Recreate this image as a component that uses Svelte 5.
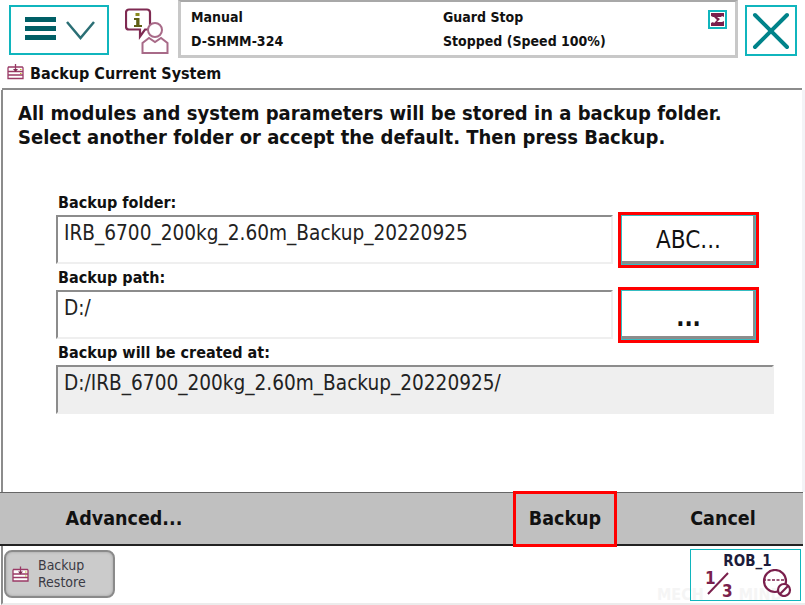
<script>
  const footerLeft = 'Advanced...'
  const fields = [
    { label: 'Backup folder:', value: 'IRB_6700_200kg_2.60m_Backup_20220925', action: 'ABC...' },
    { label: 'Backup path:', value: 'D:/', action: '...' }
  ]
</script>

<div class="screen">
  <header class="topbar">
    <button class="menu-btn" aria-label="Menu">
      <svg width="96" height="46" viewBox="0 0 96 46">
        <path d="M14 12.500h31M14 21.500h31M14 30.500h31" stroke="#005f66" stroke-width="5" fill="none" />
        <path d="M56 15l13.500 16L83 15" stroke="#2b6f75" stroke-width="2.500" fill="none" />
      </svg>
    </button>
    <div class="info-icon">
      <svg width="46" height="46" viewBox="0 0 46 46">
        <path d="M4 1.500h18a3 3 0 0 1 3 3v14a3 3 0 0 1-3 3h-2l-5 7v-7H4a3 3 0 0 1-3-3V4.500a3 3 0 0 1 3-3z" fill="#fff" stroke="#7f2a52" stroke-width="2.200" />
        <rect x="10.500" y="5" width="4" height="3" fill="#8a8a1e" />
        <path d="M9 10h5.500v7H17v2H9v-2h2.200v-5H9z" fill="#5e5e14" />
        <circle cx="30" cy="22" r="7" fill="#fff" stroke="#a86a88" stroke-width="2" />
        <path d="M17.500 45v-10l6.500-5 6 4 6-4 6.500 5v10z" fill="#fff" stroke="#a86a88" stroke-width="2" />
      </svg>
    </div>
    <div class="status">
      <div class="status-col col-a">
        <span>Manual</span>
        <span>D-SHMM-324</span>
      </div>
      <div class="status-col col-b">
        <span>Guard Stop</span>
        <span>Stopped (Speed 100%)</span>
      </div>
      <div class="speed-badge">
        <svg width="15" height="15" viewBox="0 0 15 15">
          <path d="M1 1h13v4l-2-1-1 1H7l3 2-3 3h5l2-1v5H1v-3l2-1 1 1 3-3-3-3H3L1 4z" fill="#7a1f4c" />
        </svg>
      </div>
    </div>
    <button class="close-btn" aria-label="Close">
      <svg width="38" height="38" viewBox="0 0 38 38">
        <path d="M3 3l32 32M35 3L3 35" stroke="#00838a" stroke-width="4" stroke-linecap="round" fill="none" />
      </svg>
    </button>
  </header>

  <div class="title-row">
    <svg class="backup-icon" width="17" height="17" viewBox="0 0 17 17">
      <path d="M1.500 4h14a1 1 0 0 1 .5 1v10.500H1V5zM1 8.500h15M1 12h15M8.500 1v7" fill="#fff" stroke="#9a3a66" stroke-width="1.300" />
      <path d="M6 6h5l-2.500 3z" fill="#7f2a52" />
      <path d="M13 6h1.500v1H13zM13 10h1.500v1H13z" fill="#b8b820" />
    </svg>
    <span>Backup Current System</span>
  </div>

  <main class="content">
    <p class="intro">All modules and system parameters will be stored in a backup folder.<br />Select another folder or accept the default. Then press Backup.</p>

    <div class="form">
      {#each fields as f}
        <div class="field-label">{f.label}</div>
        <div class="field-row">
          <div class="input">{f.value}</div>
          <div class="highlight">
            <button class="action" class:dots={f.action === '...'}>{f.action}</button>
          </div>
        </div>
      {/each}
      <div class="field-label result-label">Backup will be created at:</div>
      <div class="input result">D:/IRB_6700_200kg_2.60m_Backup_20220925/</div>
    </div>
  </main>

  <footer class="cmdbar">
    <div class="cmd advanced">{footerLeft}</div>
    <div class="cmd backup">Backup</div>
    <div class="cmd cancel">Cancel</div>
  </footer>

  <div class="taskbar">
    <button class="task-btn">
      <svg width="17" height="18" viewBox="0 0 17 17">
        <path d="M1.500 4h14a1 1 0 0 1 .5 1v10.500H1V5zM1 8.500h15M1 12h15M8.500 1v7" fill="#fff" stroke="#9a3a66" stroke-width="1.300" />
        <path d="M6 6h5l-2.500 3z" fill="#7f2a52" />
        <path d="M13 6h1.500v1H13zM13 10h1.500v1H13z" fill="#b8b820" />
      </svg>
      <span>Backup<br />Restore</span>
    </button>
    <div class="watermark">MECH MIND</div>
    <div class="rob">
      <div class="rob-name">ROB_1</div>
      <div class="rob-icons">
        <div class="fraction">
          <svg width="32" height="28" viewBox="0 0 32 28">
            <path d="M25 4L5 25" stroke="#7a1f4c" stroke-width="2" fill="none" />
          </svg>
          <span class="num">1</span>
          <span class="den">3</span>
        </div>
        <svg width="34" height="28" viewBox="0 0 34 28">
          <circle cx="13" cy="12" r="11" fill="none" stroke="#7a1f4c" stroke-width="2.200" />
          <path d="M1 11h24" stroke="#7a1f4c" stroke-width="1.600" stroke-dasharray="3 1.500" />
          <circle cx="22" cy="21" r="6" fill="#fff" stroke="#7a1f4c" stroke-width="2.200" />
          <path d="M18 25l8-8" stroke="#7a1f4c" stroke-width="2.200" />
        </svg>
      </div>
    </div>
  </div>
</div>

<style>
  :global(body) {
    margin: 0;
    background: #fff;
  }
  .screen {
    width: 805px;
    height: 605px;
    box-sizing: border-box;
    display: flex;
    flex-direction: column;
    background: #fff;
    font-family: "DejaVu Sans", sans-serif;
    font-stretch: condensed;
    color: #111;
    overflow: hidden;
  }
  button {
    font: inherit;
    color: inherit;
    padding: 0;
    cursor: pointer;
  }
  .topbar {
    height: 58px;
    flex: none;
    display: flex;
    align-items: flex-start;
  }
  .menu-btn {
    width: 100px;
    height: 50px;
    margin: 5px 0 0 9px;
    flex: none;
    background: #fff;
    border: 2px solid #10b5bd;
    display: flex;
    align-items: center;
    justify-content: center;
  }
  .info-icon {
    width: 46px;
    height: 46px;
    margin: 8px 0 0 16px;
    flex: none;
  }
  .status {
    width: 560px;
    height: 58px;
    margin-left: 7px;
    flex: none;
    box-sizing: border-box;
    border: solid #c8c8c8;
    border-width: 2px 3px 3px 3px;
    border-top-color: #a8a8a8;
    display: flex;
    padding: 0 0 0 10px;
    font-size: 14px;
    font-weight: 700;
    position: relative;
  }
  .status-col {
    display: flex;
    flex-direction: column;
    gap: 7px;
    padding-top: 7px;
    line-height: 17px;
    white-space: nowrap;
  }
  .col-a {
    width: 252px;
  }
  .speed-badge {
    position: absolute;
    top: 8px;
    right: 8px;
    width: 15px;
    height: 15px;
    border: 2px solid #10b5bd;
    display: flex;
    align-items: center;
    justify-content: center;
  }
  .close-btn {
    width: 52px;
    height: 51px;
    margin: 5px 0 0 7px;
    flex: none;
    background: #fff;
    border: 2px solid #10b5bd;
    display: flex;
    align-items: center;
    justify-content: center;
  }
  .title-row {
    height: 32px;
    flex: none;
    box-sizing: border-box;
    margin: 0 3px 0 2px;
    padding-left: 5px;
    border-bottom: 2px solid #8c8c8c;
    display: flex;
    align-items: center;
    gap: 6px;
    font-size: 16px;
    font-weight: 700;
  }
  .backup-icon {
    margin-top: -3px;
  }
  .content {
    flex: 1;
    box-sizing: border-box;
    margin-left: 1px;
    border-left: 2px solid #8c8c8c;
    border-right: 3px solid #f3f3f6;
    padding: 11px 0 0 15px;
  }
  .intro {
    margin: 0;
    font-size: 20px;
    font-weight: 700;
    line-height: 24px;
    white-space: nowrap;
    color: #111;
  }
  .form {
    margin: 46px 0 0 38px;
    width: 718px;
  }
  .field-label {
    font-size: 16px;
    font-weight: 700;
    line-height: 16px;
    height: 16px;
    padding-left: 2px;
    margin-bottom: 1px;
    white-space: nowrap;
  }
  .field-row {
    display: flex;
    align-items: flex-start;
    height: 56px;
    gap: 5px;
  }
  .field-row + .field-label {
    margin-top: 2px;
  }
  .field-row .input {
    margin-top: 3px;
  }
  .input {
    box-sizing: border-box;
    width: 557px;
    height: 49px;
    background: #fff;
    border: solid #efefef;
    border-width: 2px;
    border-top-color: #8c8c8c;
    border-left-color: #8c8c8c;
    padding: 4px 0 0 6px;
    font-size: 20.600px;
    line-height: 24px;
    color: #222;
    white-space: nowrap;
  }
  .highlight {
    box-sizing: border-box;
    width: 141px;
    height: 56px;
    border: 3px solid #f00;
    flex: none;
  }
  .action {
    display: block;
    width: 100%;
    height: 100%;
    box-sizing: border-box;
    background: #fff;
    border: 1px solid #35bcc2;
    box-shadow: inset -2px -3px 0 #8c8c8c;
    font-size: 24px;
    color: #111;
  }
  .action.dots {
    font-weight: 700;
    padding-top: 6px;
  }
  .result-label {
    margin-top: 1px;
    margin-bottom: 4px;
  }
  .result {
    width: 718px;
    background: #efefef;
  }
  .cmdbar {
    height: 54px;
    flex: none;
    box-sizing: border-box;
    background: #c0c0c0;
    border-top: 1px solid #666;
    border-bottom: 2px solid #222;
    margin-right: 2px;
    display: flex;
    align-items: center;
    font-size: 19.500px;
    font-weight: 700;
  }
  .cmd {
    flex: none;
    text-align: center;
    white-space: nowrap;
  }
  .advanced {
    width: 248px;
  }
  .backup {
    box-sizing: border-box;
    width: 104px;
    height: 56px;
    margin-left: 265px;
    border: 3px solid #f00;
    line-height: 50px;
  }
  .cancel {
    width: 160px;
    margin-left: 26px;
  }
  .taskbar {
    height: 59px;
    flex: none;
    position: relative;
    display: flex;
    align-items: flex-start;
    justify-content: space-between;
    border-bottom: 2px solid #ececec;
    box-sizing: border-box;
    margin-left: 1px;
    border-left: 2px solid #8c8c8c;
  }
  .task-btn {
    margin: 4px 0 0 1px;
    width: 111px;
    height: 48px;
    box-sizing: border-box;
    border: 2px solid #8a8a8a;
    border-radius: 8px;
    background: #cbcbcb;
    box-shadow: inset 0 0 3px #a0a0a0;
    display: flex;
    align-items: center;
    gap: 9px;
    padding-left: 6px;
    font-size: 14px;
    line-height: 17px;
    text-align: left;
    color: #3a3a44;
  }
  .watermark {
    position: absolute;
    left: 654px;
    top: 39px;
    font-size: 16px;
    font-weight: 700;
    word-spacing: 30px;
    color: #f5f5f5;
    white-space: nowrap;
  }
  .rob {
    position: relative;
    box-sizing: border-box;
    width: 111px;
    height: 52px;
    margin: 3px 4px 0 0;
    border: 1px solid #10b5bd;
    text-align: center;
  }
  .rob-name {
    font-size: 15px;
    font-weight: 700;
    line-height: 16px;
    margin-top: 3px;
    padding-left: 4px;
    color: #1c1c3a;
  }
  .rob-icons {
    display: flex;
    justify-content: space-between;
    padding: 0 4px 0 12px;
  }
  .fraction {
    position: relative;
    width: 32px;
    height: 28px;
  }
  .num,
  .den {
    position: absolute;
    font-size: 17px;
    font-weight: 700;
    line-height: 14px;
    color: #7a1f4c;
  }
  .num {
    left: 2px;
    top: 2px;
  }
  .den {
    left: 19px;
    top: 15px;
  }
</style>
